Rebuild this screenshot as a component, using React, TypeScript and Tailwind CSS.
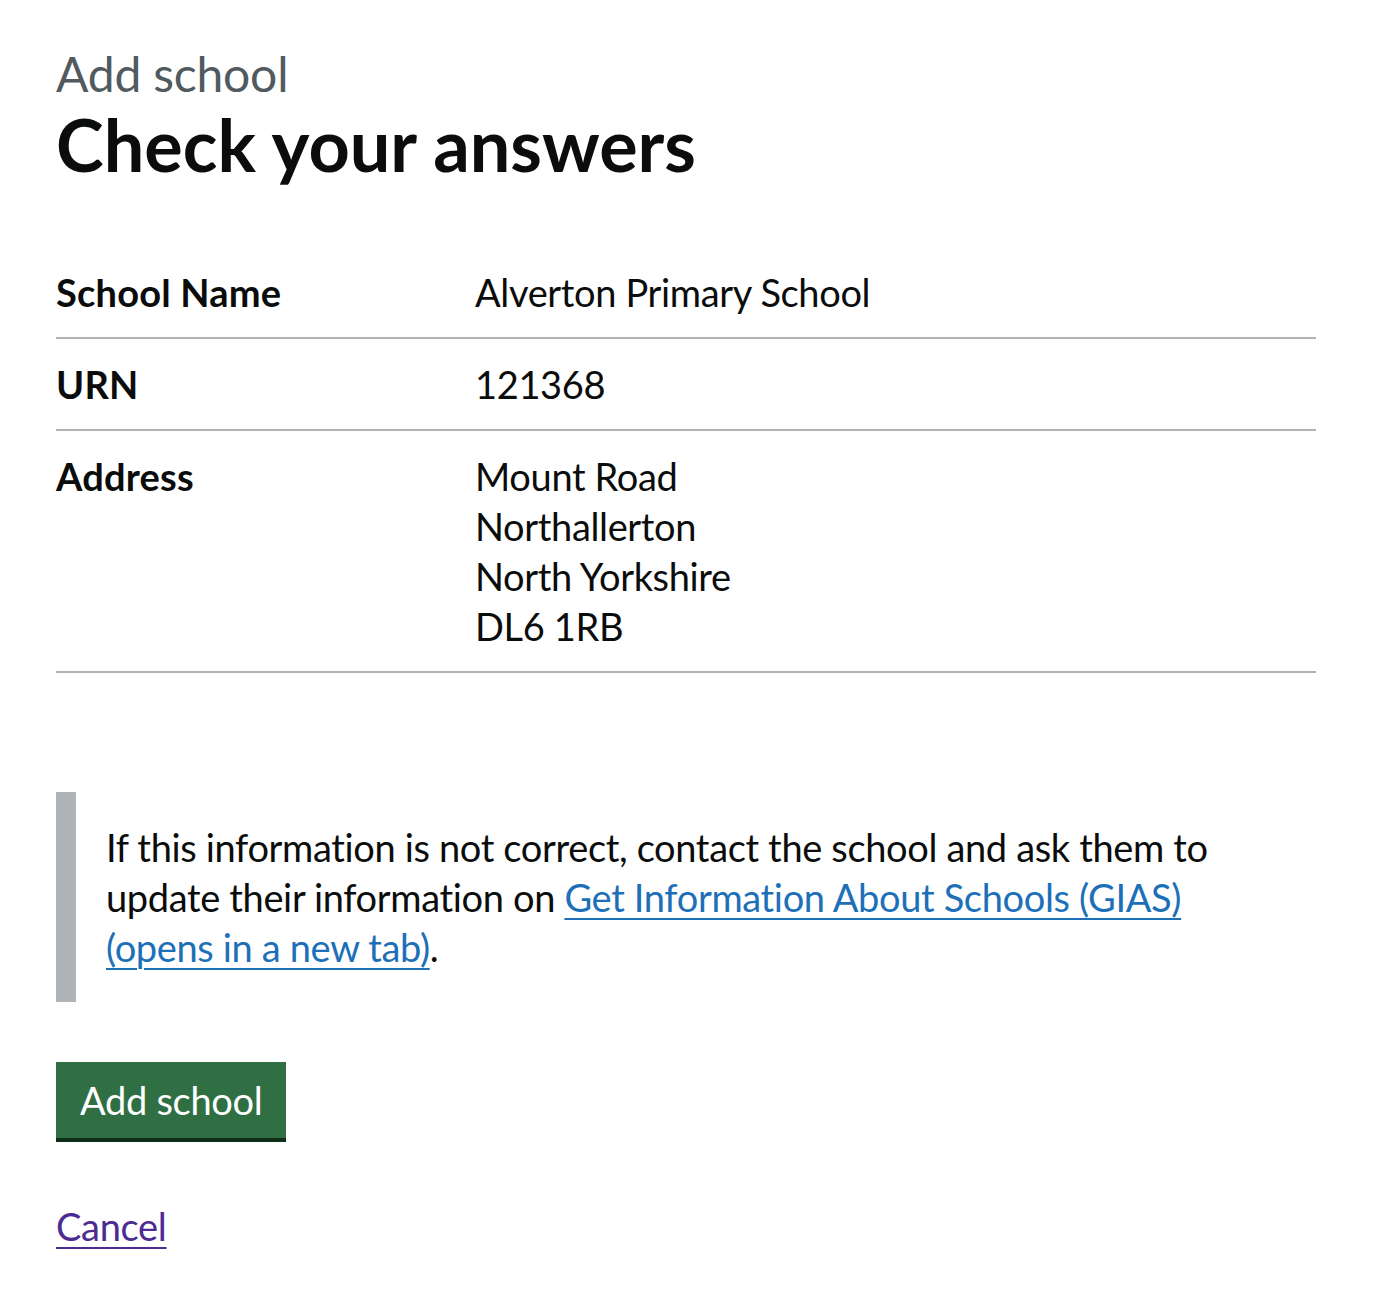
const font = { fontFamily: 'Lato, "Noto Sans", Arial, sans-serif' };

const rows = [
    { key: 'School Name', value: ['Alverton Primary School'] },
    { key: 'URN', value: ['121368'] },
    { key: 'Address', value: ['Mount Road', 'Northallerton', 'North Yorkshire', 'DL6 1RB'] },
];

export default function App() {
    return (
        <div className="min-h-[1316px] bg-white text-[#0b0c0c]" style={font}>
            <main className="px-[56px] pt-[44px] pb-[40px]">
                <span className="block text-[48px] leading-[60px] text-[#505a5f] tracking-[-0.2px]">Add school</span>
                <h1 className="text-[72px] leading-[80px] font-bold mb-[63px]">Check your answers</h1>

                <dl className="w-[1260px] mb-[60px]">
                    {rows.map((row) => (
                        <div key={row.key} className="flex border-b-2 border-[#b1b4b6] py-[20px]">
                            <dt className="w-[419px] shrink-0 pr-[40px] text-[38px] leading-[50px] font-bold tracking-[0.2px]">
                                {row.key}
                            </dt>
                            <dd className="text-[38px] leading-[50px] tracking-[-0.35px]">
                                {row.value.map((line) => (
                                    <div key={line}>{line}</div>
                                ))}
                            </dd>
                        </div>
                    ))}
                </dl>

                <div className="mt-[119px] mb-[60px] border-l-[20px] border-[#b1b4b6] py-[30px] pl-[30px] text-[38px] leading-[50px] tracking-[-0.35px]">
                    <p>
                        If this information is not correct, contact the school and ask them to
                        <br />
                        update their information on{' '}
                        <a
                            href="#"
                            className="text-[#1d70b8] underline decoration-[2px] underline-offset-[6px]"
                        >
                            Get Information About Schools (GIAS)
                            <br />
                            (opens in a new tab)
                        </a>
                        .
                    </p>
                </div>

                <button
                    type="button"
                    className="block h-[76px] px-[24px] bg-[#306f44] text-white text-[38px] leading-none tracking-[-0.3px] shadow-[0_4px_0_#0f2e19]"
                >
                    Add school
                </button>

                <p className="mt-[63px] text-[38px] leading-[50px] tracking-[-0.3px]">
                    <a href="#" className="text-[#4c2c92] underline decoration-[2px] underline-offset-[6px]">
                        Cancel
                    </a>
                </p>
            </main>
        </div>
    );
}
